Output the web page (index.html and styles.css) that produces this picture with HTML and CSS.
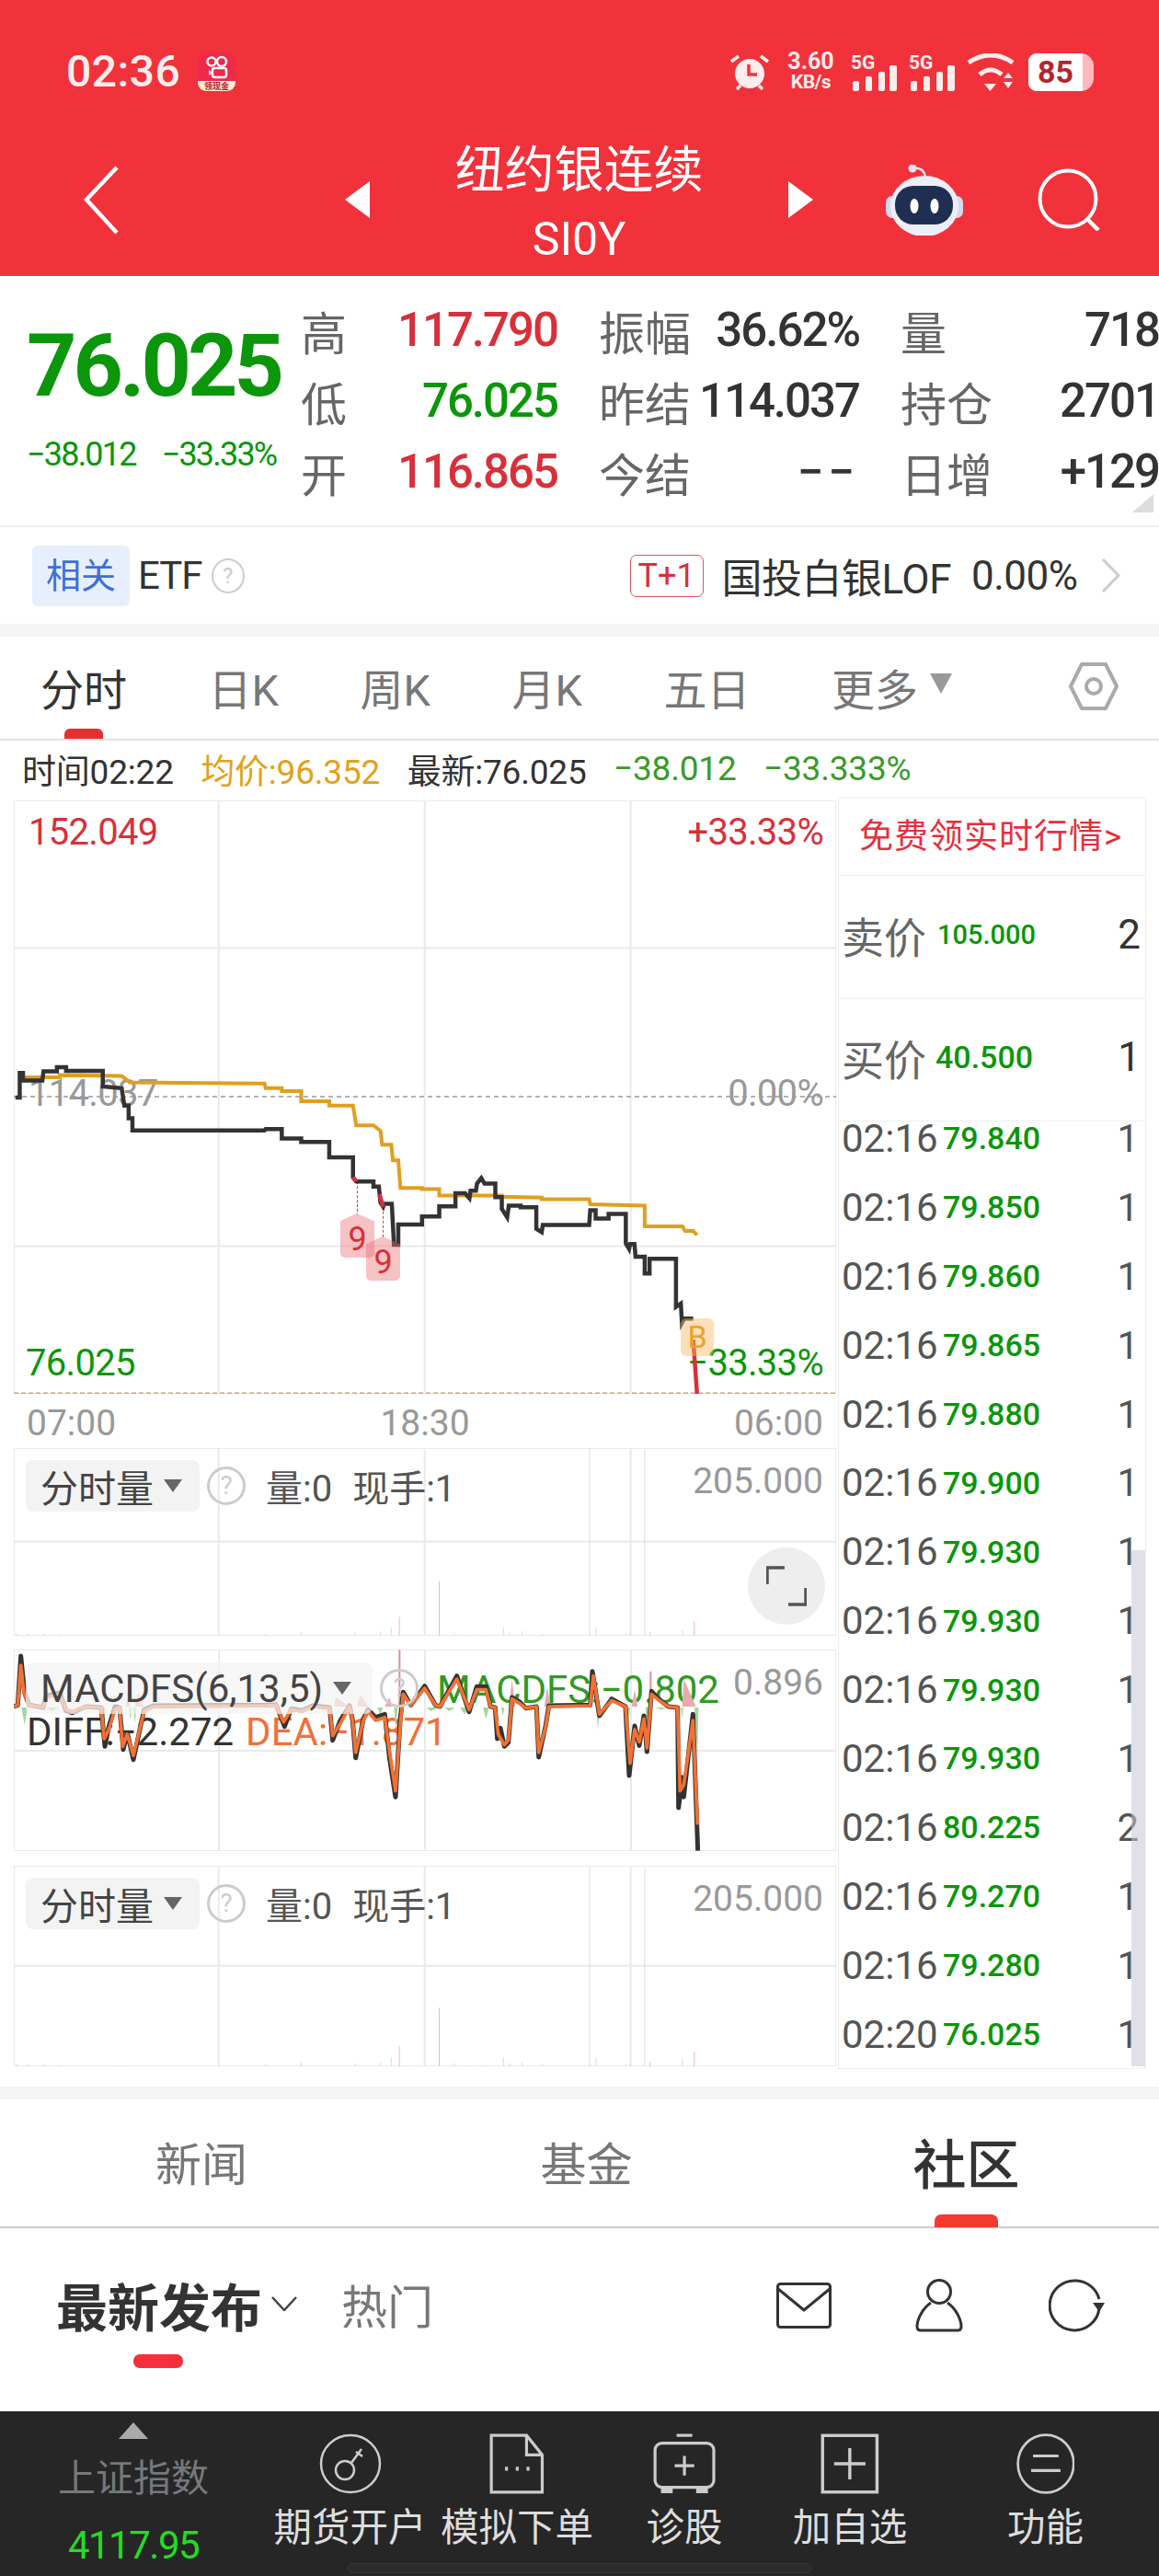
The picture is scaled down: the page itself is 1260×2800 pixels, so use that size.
FILE: index.html
```html
<!DOCTYPE html>
<html lang="zh">
<head>
    <meta charset="UTF-8">
    <title>纽约银连续</title>
    <link rel="stylesheet" href="styles.css">
</head>
<body>
    <header class="top">
        <div class="status">
            <span class="clock">02:36</span>
            <svg class="app-icon" viewBox="0 0 41 42">
                <rect width="41" height="42" rx="9" fill="#ee2a48"/>
                <path d="M0 31H41V33A9 9 0 0 1 32 42H9A9 9 0 0 1 0 33Z" fill="#fdeccb"/>
                <circle cx="15" cy="10" r="4.5" fill="none" stroke="#fff" stroke-width="2.5"/>
                <circle cx="26" cy="10" r="5" fill="none" stroke="#fff" stroke-width="2.5"/>
                <rect x="16" y="17" width="15" height="10" rx="2.5" fill="none" stroke="#fff" stroke-width="2.5"/>
                <path d="M12 19L16 22L12 25Z" fill="#fff"/>
                <text x="20.5" y="40" text-anchor="middle" class="app-icon-text">领现金</text>
            </svg>
            <svg class="alarm" viewBox="0 0 44 41">
                <circle cx="22" cy="22" r="16" fill="#fdecec"/>
                <path d="M21 12V23H30" fill="none" stroke="#f1323b" stroke-width="3.5"/>
                <path d="M2 9L10 3M34 3L42 9M8 39L12 35M36 39L32 35" stroke="#fdecec" stroke-width="3.5"/>
            </svg>
            <div class="speed"><b>3.60</b><span>KB/s</span></div>
            <svg class="signal signal-first" viewBox="0 0 50 41">
                <text x="0" y="17" class="signal-text">5G</text>
                <rect x="2" y="30" width="7" height="11" rx="2"/>
                <rect x="16" y="25" width="7" height="16" rx="2"/>
                <rect x="30" y="20" width="7" height="21" rx="2"/>
                <rect x="42" y="13" width="8" height="28" rx="2"/>
            </svg>
            <svg class="signal" viewBox="0 0 50 41">
                <text x="0" y="17" class="signal-text">5G</text>
                <rect x="2" y="30" width="7" height="11" rx="2"/>
                <rect x="16" y="25" width="7" height="16" rx="2"/>
                <rect x="30" y="20" width="7" height="21" rx="2"/>
                <rect x="42" y="13" width="8" height="28" rx="2"/>
            </svg>
            <svg class="wifi" viewBox="0 0 52 41">
                <path d="M2 10Q26 -6 50 10" fill="none" stroke="#fdecec" stroke-width="5"/>
                <path d="M14 23Q26 13 38 23" fill="none" stroke="#fdecec" stroke-width="5"/>
                <path d="M19 33H32L25.5 41ZM40 27H50L45 21ZM40 31H50L45 38Z" fill="#fdecec"/>
            </svg>
            <div class="battery"><span class="battery-level">85</span></div>
        </div>
        <nav class="nav">
            <svg class="back" viewBox="0 0 38 75"><path d="M36 2L3 37L36 73" fill="none" stroke="#fff" stroke-width="4.5"/></svg>
            <span class="tri-left"></span>
            <div class="title">
                <div class="title-name">纽约银连续</div>
                <div class="title-code">SI0Y</div>
            </div>
            <span class="tri-right"></span>
            <svg class="robot" viewBox="0 0 84 77">
                <path d="M29 4Q41 2 43 13" fill="none" stroke="#e6e4f2" stroke-width="2.5"/>
                <circle cx="29" cy="4" r="4.5" fill="#e6e4f2"/>
                <rect x="0" y="34" width="84" height="24" rx="7" fill="#d8d8ec"/>
                <ellipse cx="42" cy="45" rx="37" ry="33" fill="#eeeef8"/>
                <rect x="10" y="23" width="63" height="42" rx="20" fill="#1f2f52"/>
                <ellipse cx="31" cy="45" rx="4.5" ry="8" fill="#fff"/>
                <ellipse cx="53" cy="45" rx="4.5" ry="8" fill="#fff"/>
            </svg>
            <svg class="search" viewBox="0 0 68 68">
                <circle cx="33" cy="33" r="30.5" fill="none" stroke="#fff" stroke-width="4"/>
                <path d="M54 55L66 67" stroke="#fff" stroke-width="4.5"/>
            </svg>
        </nav>
    </header>

    <section class="quote">
        <div class="quote-main">
            <div class="price">76.025</div>
            <div class="change"><span>−38.012</span><span>−33.33%</span></div>
        </div>
        <div class="stats">
            <div class="stat"><label>高</label><b class="up">117.790</b></div>
            <div class="stat"><label>振幅</label><b>36.62%</b></div>
            <div class="stat"><label>量</label><b>718</b></div>
            <div class="stat"><label>低</label><b class="down">76.025</b></div>
            <div class="stat"><label>昨结</label><b>114.037</b></div>
            <div class="stat"><label>持仓</label><b>2701</b></div>
            <div class="stat"><label>开</label><b class="up">116.865</b></div>
            <div class="stat"><label>今结</label><b class="stat-empty">−−</b></div>
            <div class="stat"><label>日增</label><b>+129</b></div>
        </div>
        <span class="corner"></span>
    </section>

    <section class="etf">
        <span class="etf-chip">相关</span>
        <span class="etf-label">ETF</span>
        <span class="help etf-help">?</span>
        <span class="t1">T+1</span>
        <span class="etf-name">国投白银LOF</span>
        <span class="etf-pct">0.00%</span>
        <svg class="etf-arrow" viewBox="0 0 21 37"><path d="M2 1L19 18.500L2 36" fill="none" stroke="#ccc" stroke-width="3"/></svg>
    </section>
    <div class="band"></div>

    <section class="tabs">
        <div class="tab tab-active">分时</div>
        <div class="tab">日K</div>
        <div class="tab">周K</div>
        <div class="tab">月K</div>
        <div class="tab">五日</div>
        <div class="tab">更多</div>
        <span class="tab-more"></span>
        <svg class="hex" viewBox="0 0 54 52">
            <path d="M14 2H40L52 26L40 50H14L2 26Z" fill="none" stroke="#aaa" stroke-width="4" stroke-linejoin="round"/>
            <circle cx="27" cy="26" r="8" fill="none" stroke="#aaa" stroke-width="4"/>
        </svg>
    </section>

    <section class="info">
        <span class="info-time">时间02:22</span>
        <span class="info-avg">均价:96.352</span>
        <span class="info-last">最新:76.025</span>
        <span class="info-down">−38.012</span>
        <span class="info-down">−33.333%</span>
    </section>

    <section class="market">
        <div class="charts">
            <div class="main-chart">
                <span class="chart-label label-tl up">152.049</span>
                <span class="chart-label label-tr up">+33.33%</span>
                <span class="chart-label label-ml muted">114.037</span>
                <span class="chart-label label-mr muted">0.00%</span>
                <span class="chart-label label-bl down">76.025</span>
                <span class="chart-label label-br down">−33.33%</span>
                <svg class="plot" viewBox="25 22 1525 1406" preserveAspectRatio="none">
                    <path class="grid" d="M25 22H1550V1428H25ZM405 22V1428M787 22V1428M1169 22V1428M25 372H1550M25 1078H1550"/>
                    <path class="dash-mid" d="M25 724H1550"/>
                    <path class="dash-low" d="M25 1427H1550"/>
                    <path class="marker" d="M662 925V1003M710 985V1058"/>
                    <polyline class="line-avg" points="45,678 110,678 110,673 225,675 240,690 490,693 492,704 522,704 522,711 558,711 558,735 610,735 610,745 654,745 660,792 692,792 705,805 708,838 725,838 728,875 738,875 742,940 782,940 782,943 814,943 814,958 930,958 930,961 1004,963 1004,967 1092,967 1094,979 1195,982 1195,1031 1265,1031 1270,1042 1285,1042 1292,1052"/>
                    <polyline class="line-price" points="28,726 36,726 36,668 42,668 42,686 78,686 80,664 105,664 105,654 122,654 122,663 190,663 190,700 225,704 230,745 238,745 238,775 245,775 245,804 490,804 492,801 522,801 522,823 558,823 558,831 610,831 610,868 654,868 654,915 660,925 692,925 692,937 702,937 705,975 710,985 712,978 726,978 730,1075 738,1075 738,1027 782,1027 782,1008 814,1008 814,984 844,984 844,953 862,953 870,965 872,947 882,947 884,930 892,917 898,930 918,930 918,962 930,962 930,990 940,1010 943,982 965,982 965,986 994,986 994,1037 1004,1045 1006,1028 1092,1028 1094,993 1104,993 1104,1013 1128,1013 1128,1002 1160,1002 1160,1072 1166,1085 1168,1073 1176,1073 1178,1103 1195,1103 1195,1143 1204,1143 1204,1108 1253,1108 1253,1222 1262,1214 1264,1260 1268,1250 1285,1250"/>
                    <path class="line-red" d="M654 915L660 925M703 955L710 985M1285 1300L1292 1428"/>
                </svg>
                <span class="trade trade-one">9</span>
                <span class="trade trade-two">9</span>
                <span class="trade-b">B</span>
            </div>
            <div class="times"><span>07:00</span><span>18:30</span><span>06:00</span></div>

            <div class="pane pane-one">
                <svg class="plot" viewBox="25 30 1525 445" preserveAspectRatio="none">
                    <path class="grid" d="M25 30H1550V475H25ZM405 30V475M787 30V475M1169 30V475M25 252H1550"/>
                    <g id="vol">
                        <path class="bar-red" d="M740 475V430M814 475V345M1287 475V442M1205 475V466"/>
                        <path class="bar-grey" d="M1093 475V30M30 475V470M52 475V470M80 475V470M110 475V472M222 475V472M492 475V470M558 475V466M842 475V468M1160 475V470"/>
                        <path class="bar-green" d="M1195 475V35M1105 475V455M1168 475V468M1265 475V460M933 475V455M968 475V464M945 475V468M705 475V465M725 475V455M658 475V468M1005 475V470M870 475V472M900 475V472"/>
                    </g>
                </svg>
                <div class="pane-head">
                    <span class="pane-chip">分时量<i class="caret"></i></span>
                    <span class="help">?</span>
                    <span class="pane-val">量:0</span>
                    <span class="pane-val">现手:1</span>
                    <span class="pane-max">205.000</span>
                </div>
                <div class="expand">
                    <svg viewBox="0 0 44 44"><path d="M1 20V2H20M24 42H43V24" fill="none" stroke="#555" stroke-width="3.500"/></svg>
                </div>
            </div>

            <div class="pane pane-macd">
                <svg class="plot" viewBox="45 69 2682 657">
                    <path class="grid" d="M45 69H2727V726H45ZM714 69V726M1386 69V726M2058 69V726M45 399H2727"/>
                </svg>
                <div class="macd-legend">
                    <span class="legend-diff">DIFF:−2.272</span>
                    <span class="legend-dea">DEA:−1.871</span>
                </div>
                <span class="legend-macd">MACDFS:−0.802</span>
                <svg class="plot" viewBox="45 69 2682 657">
                    <path class="hist-red" d="M410 255L415 225L425 255ZM440 255L450 210L470 255ZM1090 255L1095 225L1140 255ZM1165 255L1175 215L1200 255ZM1255 255L1270 225L1280 255ZM1660 255L1670 165L1680 255ZM1775 255L1785 190L1795 255ZM2060 255L2070 200L2080 255ZM2225 255L2230 165L2270 255Z"/>
                    <path class="hist-spike" d="M1303 255V70M2122 255V140"/>
                    <path class="hist-green" d="M70 258L80 315L90 258ZM150 258L170 270L190 258ZM335 258L340 315L345 258ZM420 258L425 300L430 258ZM435 258L440 310L445 258ZM1230 258L1240 280L1250 258ZM1285 258L1290 330L1297 258ZM1390 258L1405 270L1430 258ZM1450 258L1465 270L1485 258ZM1500 258L1515 280L1530 258ZM1575 258L1585 295L1595 258ZM1635 258L1640 285L1645 258ZM1945 258L1950 330L1957 258ZM2045 258L2050 320L2055 258ZM2105 258L2110 330L2115 258ZM2140 258L2155 265L2180 258ZM2220 258L2225 295L2228 258ZM2265 258L2275 420L2278 258Z"/>
                    <polyline class="line-diff" points="45,255 58,250 68,90 80,210 95,250 140,258 150,220 195,210 215,268 235,275 280,255 330,258 342,385 355,320 375,255 390,258 402,395 415,340 435,428 470,265 500,252 870,250 900,248 928,320 950,262 985,268 1020,252 1075,258 1085,365 1110,300 1140,252 1150,300 1160,422 1185,295 1200,265 1225,290 1255,280 1270,420 1290,550 1305,300 1315,208 1340,250 1385,188 1420,250 1435,255 1490,155 1530,272 1555,190 1585,190 1600,255 1615,258 1622,360 1632,325 1645,385 1658,372 1670,225 1695,240 1715,260 1750,255 1757,420 1780,315 1790,252 1925,250 1932,140 1955,285 1995,230 2040,255 2052,480 2070,318 2085,382 2100,285 2110,402 2125,205 2150,232 2180,255 2210,258 2213,585 2225,485 2230,550 2260,280 2276,725"/>
                    <polyline class="line-dea" points="45,255 58,250 68,120 78,210 95,250 140,258 150,225 195,215 215,265 235,272 280,255 330,258 340,360 355,330 375,265 390,258 400,385 415,345 435,415 470,270 500,255 870,252 900,250 925,305 950,265 985,270 1020,255 1075,260 1085,350 1110,310 1140,255 1150,300 1160,405 1185,300 1200,270 1225,300 1255,290 1270,400 1290,530 1305,320 1315,215 1340,250 1385,195 1420,250 1435,255 1490,165 1530,265 1555,200 1585,200 1600,255 1615,258 1625,345 1645,380 1658,365 1670,230 1695,245 1715,260 1750,255 1757,405 1780,320 1790,255 1925,252 1935,155 1955,280 1995,235 2040,255 2055,440 2070,330 2085,370 2100,295 2110,390 2125,215 2150,235 2180,255 2210,258 2218,530 2230,510 2260,300 2275,640"/>
                </svg>
                <div class="pane-head pane-head-macd">
                    <span class="pane-chip pane-chip-macd">MACDFS(6,13,5)<i class="caret"></i></span>
                    <span class="help">?</span>
                    <span class="pane-max pane-max-macd">0.896</span>
                </div>
            </div>

            <div class="pane pane-three">
                <svg class="plot" viewBox="25 30 1525 445" preserveAspectRatio="none">
                    <path class="grid" d="M25 30H1550V475H25ZM405 30V475M787 30V475M1169 30V475M25 252H1550"/>
                    <use href="#vol"/>
                </svg>
                <div class="pane-head">
                    <span class="pane-chip">分时量<i class="caret"></i></span>
                    <span class="help">?</span>
                    <span class="pane-val">量:0</span>
                    <span class="pane-val">现手:1</span>
                    <span class="pane-max">205.000</span>
                </div>
            </div>
        </div>

        <aside class="ticks">
            <div class="promo">免费领实时行情&gt;</div>
            <div class="book book-first">
                <span class="book-name">卖价</span><span class="book-price book-price-small">105.000</span><span class="book-qty">2</span>
            </div>
            <div class="book">
                <span class="book-name">买价</span><span class="book-price">40.500</span><span class="book-qty">1</span>
            </div>
            <div class="tick-list">
                <div class="tick"><span class="tick-time">02:16</span><span class="tick-price">79.840</span><span class="tick-qty">1</span></div>
                <div class="tick"><span class="tick-time">02:16</span><span class="tick-price">79.850</span><span class="tick-qty">1</span></div>
                <div class="tick"><span class="tick-time">02:16</span><span class="tick-price">79.860</span><span class="tick-qty">1</span></div>
                <div class="tick"><span class="tick-time">02:16</span><span class="tick-price">79.865</span><span class="tick-qty">1</span></div>
                <div class="tick"><span class="tick-time">02:16</span><span class="tick-price">79.880</span><span class="tick-qty">1</span></div>
                <div class="tick"><span class="tick-time">02:16</span><span class="tick-price">79.900</span><span class="tick-qty">1</span></div>
                <div class="tick"><span class="tick-time">02:16</span><span class="tick-price">79.930</span><span class="tick-qty">1</span></div>
                <div class="tick"><span class="tick-time">02:16</span><span class="tick-price">79.930</span><span class="tick-qty">1</span></div>
                <div class="tick"><span class="tick-time">02:16</span><span class="tick-price">79.930</span><span class="tick-qty">1</span></div>
                <div class="tick"><span class="tick-time">02:16</span><span class="tick-price">79.930</span><span class="tick-qty">1</span></div>
                <div class="tick"><span class="tick-time">02:16</span><span class="tick-price">80.225</span><span class="tick-qty">2</span></div>
                <div class="tick"><span class="tick-time">02:16</span><span class="tick-price">79.270</span><span class="tick-qty">1</span></div>
                <div class="tick"><span class="tick-time">02:16</span><span class="tick-price">79.280</span><span class="tick-qty">1</span></div>
                <div class="tick"><span class="tick-time">02:20</span><span class="tick-price">76.025</span><span class="tick-qty">1</span></div>
            </div>
            <span class="scrollbar"></span>
        </aside>
    </section>
    <div class="band"></div>

    <section class="news-tabs">
        <div class="news-tab">新闻</div>
        <div class="news-tab">基金</div>
        <div class="news-tab news-tab-active">社区</div>
    </section>

    <section class="feed">
        <div class="feed-row">
            <span class="feed-latest">最新发布</span>
            <svg class="feed-chevron" viewBox="0 0 28 16"><path d="M1 1L14 15L27 1" fill="none" stroke="#444" stroke-width="2.500"/></svg>
            <span class="feed-hot">热门</span>
            <svg class="feed-mail" viewBox="0 0 60 50">
                <rect x="1.500" y="1.500" width="57" height="47" rx="3" fill="none" stroke="#333" stroke-width="3"/>
                <path d="M2 7L30 30L58 7" fill="none" stroke="#333" stroke-width="3"/>
            </svg>
            <svg class="feed-user" viewBox="0 0 52 58">
                <ellipse cx="26" cy="14" rx="12.500" ry="12.500" fill="none" stroke="#333" stroke-width="3"/>
                <path d="M17 26C8 32 2 44 2 52Q2 56 6 56H46Q50 56 50 52C50 44 44 32 35 26" fill="none" stroke="#333" stroke-width="3"/>
            </svg>
            <svg class="feed-refresh" viewBox="0 0 61 58">
                <path d="M30 2A27 27 0 1 0 55 32" fill="none" stroke="#333" stroke-width="3"/>
                <path d="M30 2A27 27 0 0 1 55 22" fill="none" stroke="#333" stroke-width="3"/>
                <path d="M48 26H61L55 36Z" fill="#333"/>
            </svg>
        </div>
        <span class="feed-mark"></span>
    </section>

    <footer class="bar">
        <div class="index">
            <span class="index-tri"></span>
            <span class="index-name">上证指数</span>
            <span class="index-val">4117.95</span>
        </div>
        <div class="bar-item">
            <svg viewBox="0 0 68 66" class="bar-icon">
                <ellipse cx="34" cy="33" rx="32" ry="31" fill="none" stroke="#ccc" stroke-width="2.500"/>
                <circle cx="28" cy="40" r="10" fill="none" stroke="#ccc" stroke-width="2.500"/>
                <path d="M35 32L46 17M40 20L47 25" fill="none" stroke="#ccc" stroke-width="2.500"/>
            </svg>
            <span>期货开户</span>
        </div>
        <div class="bar-item">
            <svg viewBox="0 0 56 62" class="bar-icon">
                <path d="M2 2H38L54 22V60H2Z M38 2V22H54" fill="none" stroke="#ccc" stroke-width="3"/>
                <path d="M16 36h3M27 36h3M38 36h3" stroke="#ccc" stroke-width="4"/>
            </svg>
            <span>模拟下单</span>
        </div>
        <div class="bar-item">
            <svg viewBox="0 0 64 62" class="bar-icon">
                <path d="M24 2H40" stroke="#ccc" stroke-width="3"/>
                <rect x="2" y="10" width="60" height="45" rx="7" fill="none" stroke="#ccc" stroke-width="3"/>
                <path d="M32 23V43M22 33H42" stroke="#ccc" stroke-width="3"/>
                <path d="M8 55V61H20V55M44 55V61H56V55" fill="#ccc"/>
            </svg>
            <span>诊股</span>
        </div>
        <div class="bar-item">
            <svg viewBox="0 0 56 58" class="bar-icon">
                <rect x="2" y="2" width="52" height="54" fill="none" stroke="#ccc" stroke-width="3"/>
                <path d="M28 14V44M13 29H43" stroke="#ccc" stroke-width="3"/>
            </svg>
            <span>加自选</span>
        </div>
        <div class="bar-item">
            <svg viewBox="0 0 60 62" class="bar-icon">
                <ellipse cx="30" cy="31" rx="28.500" ry="29.500" fill="none" stroke="#ccc" stroke-width="2.500"/>
                <path d="M17 23H43M15 38H45" stroke="#ccc" stroke-width="3"/>
            </svg>
            <span>功能</span>
        </div>
        <span class="home"></span>
    </footer>
</body>
</html>
```

FILE: styles.css
```css
* {
    box-sizing: border-box;
}

body {
    margin: 0;
    width: 1260px;
    height: 2800px;
    overflow: hidden;
    background-color: #fff;
    color: #333;
    font-family: Roboto, "Noto Sans CJK SC", sans-serif;
}

.up { color: #d8303a; }
.down { color: #0b960b; }
.muted { color: #999; }

/* red header */
.top {
    height: 300px;
    padding-top: 57px;
    background-color: #f1323b;
    border-bottom: 1px solid #d9444b;
}

.status {
    display: flex;
    align-items: center;
    height: 42px;
    padding-left: 72px;
    color: #fdecec;
}

.clock {
    width: 125px;
    font-size: 48px;
    font-weight: 500;
    letter-spacing: 0.5px;
    line-height: 42px;
}

.app-icon {
    width: 41px;
    height: 42px;
    margin-left: 18px;
}

.app-icon-text {
    font-size: 9px;
    font-weight: 700;
    fill: #b3222a;
}

.alarm {
    width: 44px;
    height: 41px;
    margin-left: 537px;
}

.speed {
    display: flex;
    flex-direction: column;
    align-items: center;
    width: 51px;
    margin-left: 19px;
    line-height: 23px;
}

.speed b {
    font-size: 25px;
    font-weight: 700;
}

.speed span {
    font-size: 21px;
    font-weight: 700;
    letter-spacing: -0.5px;
}

.signal {
    width: 50px;
    height: 41px;
    margin-left: 13px;
    fill: #fdecec;
    overflow: visible;
}

.signal-first {
    margin-left: 18px;
}

.signal-text {
    font-size: 21px;
    font-weight: 700;
}

.wifi {
    width: 52px;
    height: 41px;
    margin-left: 13px;
}

.battery {
    width: 71px;
    height: 41px;
    margin-left: 15px;
    padding-right: 12px;
    border-radius: 9px 14px 14px 9px;
    background-color: #ffb9bd;
}

.battery-level {
    display: block;
    height: 100%;
    border-radius: 9px 0 0 9px;
    background-color: #fff;
    color: #b3262f;
    font-size: 34px;
    font-weight: 700;
    line-height: 41px;
    text-align: center;
}

.nav {
    display: flex;
    align-items: center;
    height: 134px;
    margin-top: 51px;
}

.back {
    width: 38px;
    height: 75px;
    margin-left: 91px;
}

.tri-left,
.tri-right {
    width: 0;
    height: 0;
    border-top: 20px solid transparent;
    border-bottom: 20px solid transparent;
}

.tri-left {
    margin-left: 246px;
    border-right: 27px solid #fff;
}

.tri-right {
    border-left: 27px solid #fff;
}

.title {
    width: 455px;
    color: #fff;
    text-align: center;
}

.title-name {
    height: 66px;
    padding-top: 3px;
    font-size: 54px;
    line-height: 66px;
}

.title-code {
    margin-top: 20px;
    height: 48px;
    font-size: 50px;
    line-height: 48px;
}

.robot {
    width: 84px;
    height: 77px;
    margin-left: 79px;
}

.search {
    width: 68px;
    height: 68px;
    margin-left: 81px;
}

/* quote block */
.quote {
    position: relative;
    display: flex;
    height: 273px;
    padding-top: 20px;
    border-bottom: 2px solid #ececec;
    overflow: hidden;
}

.quote-main {
    width: 330px;
    padding-left: 29px;
}

.price {
    margin-top: 34px;
    color: #0b960b;
    font-size: 95px;
    font-weight: 700;
    letter-spacing: -4px;
    line-height: 88px;
}

.change {
    display: flex;
    gap: 28px;
    margin-top: 32px;
    color: #0b960b;
    font-size: 36px;
    letter-spacing: -1.8px;
    line-height: 40px;
}

.stats {
    display: grid;
    grid-template-columns: 279px 283px 281px;
    grid-auto-rows: 77px;
    column-gap: 45px;
}

.stat {
    display: flex;
    justify-content: space-between;
    align-items: center;
}

.stat label {
    color: #666;
    font-size: 50px;
}

.stat b {
    font-size: 51px;
    font-weight: 500;
    letter-spacing: -2px;
}

.stat-empty {
    letter-spacing: 5px !important;
}

.corner {
    position: absolute;
    right: 6px;
    bottom: 14px;
    width: 0;
    height: 0;
    border-left: 23px solid transparent;
    border-bottom: 20px solid #ddd;
}

/* ETF row */
.etf {
    display: flex;
    align-items: center;
    height: 105px;
    padding-left: 35px;
}

.etf-chip {
    width: 106px;
    height: 66px;
    border-radius: 6px;
    background-color: #e8effc;
    color: #3d6fd8;
    font-size: 38px;
    line-height: 66px;
    text-align: center;
}

.etf-label {
    margin-left: 9px;
    font-size: 42px;
    letter-spacing: -1px;
}

.help {
    display: block;
    flex: none;
    width: 42px;
    height: 42px;
    border: 3px solid #ccc;
    border-radius: 50%;
    color: #ccc;
    font-size: 28px;
    line-height: 36px;
    text-align: center;
}

.etf-help {
    width: 36px;
    height: 38px;
    margin-left: 10px;
    border-width: 2px;
    font-size: 24px;
    line-height: 34px;
}

.t1 {
    width: 80px;
    height: 46px;
    margin-left: 419px;
    border: 1px solid #d9565c;
    border-radius: 7px;
    color: #d8303a;
    font-size: 36px;
    line-height: 44px;
    text-align: center;
}

.etf-name {
    margin-left: 20px;
    font-size: 44px;
    letter-spacing: -0.5px;
}

.etf-pct {
    margin-left: 22px;
    font-size: 44px;
    letter-spacing: -0.5px;
}

.etf-arrow {
    width: 21px;
    height: 37px;
    margin-left: 26px;
}

.band {
    height: 14px;
    background-color: #f5f5f5;
}

/* period tabs */
.tabs {
    position: relative;
    display: flex;
    align-items: center;
    gap: 88.500px;
    height: 113px;
    padding-left: 44px;
    padding-bottom: 3px;
    border-bottom: 2px solid #e4e4e4;
}

.tab {
    color: #777;
    font-size: 47px;
}

.tab-active {
    position: relative;
    color: #333;
}

.tab-active::after {
    content: "";
    position: absolute;
    left: 26px;
    bottom: -22px;
    width: 42px;
    height: 11px;
    border-radius: 6px 6px 0 0;
    background-color: #e6302f;
}

.tab-more {
    margin-left: -76px;
    margin-top: -6px;
    width: 0;
    height: 0;
    border-left: 12px solid transparent;
    border-right: 12px solid transparent;
    border-top: 22px solid #999;
}

.hex {
    width: 54px;
    height: 52px;
    margin-left: 39px;
}

/* live values row */
.info {
    display: flex;
    align-items: center;
    gap: 29.500px;
    height: 61px;
    padding-left: 24px;
    font-size: 37px;
    letter-spacing: -0.2px;
    white-space: nowrap;
}

.info-avg { color: #e0a21d; }
.info-time, .info-last { color: #333; }
.info-down { color: #3a9a2a; }

/* charts and ticks */
.market {
    display: flex;
    height: 1402px;
    overflow: hidden;
}

.charts {
    width: 896px;
    margin-left: 15px;
    padding-top: 4px;
}

.plot {
    position: absolute;
    left: 0;
    top: 0;
    width: 100%;
    height: 100%;
}

.main-chart {
    position: relative;
    width: 894px;
    height: 645px;
}

.grid {
    fill: none;
    stroke: #eaeaea;
    stroke-width: 2px;
    vector-effect: non-scaling-stroke;
}

.dash-mid,
.dash-low,
.marker,
.line-avg,
.line-price,
.line-red {
    fill: none;
    vector-effect: non-scaling-stroke;
}

.dash-mid {
    stroke: #999;
    stroke-width: 1.5px;
    stroke-dasharray: 5 4;
}

.dash-low {
    stroke: #c9a57a;
    stroke-width: 2px;
    stroke-dasharray: 5 3;
}

.marker {
    stroke: #d8303a;
    stroke-width: 1px;
    stroke-dasharray: 3 2;
}

.line-avg {
    stroke: #e09f1f;
    stroke-width: 4px;
}

.line-price {
    stroke: #333;
    stroke-width: 4.500px;
}

.line-red {
    stroke: #d8303a;
    stroke-width: 4.500px;
}

.chart-label {
    position: absolute;
    font-size: 40px;
    letter-spacing: -0.7px;
    line-height: 44px;
}

.label-tl { left: 16px; top: 13px; }
.label-tr { right: 14px; top: 13px; }
.label-ml { left: 16px; top: 297px; }
.label-mr { right: 14px; top: 297px; }
.label-bl { left: 13px; top: 590px; }
.label-br { right: 14px; top: 590px; }

.trade {
    position: absolute;
    width: 37px;
    height: 40px;
    border-radius: 0 0 5px 5px;
    background-color: rgba(236, 110, 115, 0.42);
    color: #d8303a;
    font-size: 36px;
    line-height: 40px;
    text-align: center;
}

.trade::before {
    content: "";
    position: absolute;
    left: 0;
    top: -8px;
    border-left: 18.500px solid transparent;
    border-right: 18.500px solid transparent;
    border-bottom: 8px solid rgba(236, 110, 115, 0.42);
}

.trade-one { left: 355px; top: 457px; }
.trade-two { left: 383px; top: 482px; }

.trade-b {
    position: absolute;
    left: 725px;
    top: 563px;
    width: 36px;
    height: 41px;
    border-radius: 6px;
    background-color: rgba(250, 185, 100, 0.45);
    color: #eda02a;
    font-size: 34px;
    line-height: 41px;
    text-align: center;
}

.times {
    display: flex;
    justify-content: space-between;
    align-items: center;
    width: 894px;
    height: 59px;
    padding: 4px 14px 0 14px;
    color: #999;
    font-size: 39px;
}

.pane {
    position: relative;
    width: 894px;
    padding: 13px 14px 0 13px;
}

.pane-one { height: 204px; }
.pane-macd { height: 219px; margin-top: 15px; }
.pane-three { height: 218px; margin-top: 16px; }

.pane-head {
    position: relative;
    display: flex;
    align-items: center;
    height: 56px;
}

.pane-chip {
    position: relative;
    z-index: 1;
    display: flex;
    align-items: center;
    width: 189px;
    height: 56px;
    padding-left: 16px;
    border-radius: 8px;
    background-color: #f3f3f3;
    color: #444;
    font-size: 41px;
}

.pane-chip-macd {
    width: 377px;
    background-color: rgba(243, 243, 243, 0.7);
    font-size: 42px;
    white-space: nowrap;
}

.caret {
    margin-left: 11px;
    border-left: 10px solid transparent;
    border-right: 10px solid transparent;
    border-top: 14px solid #666;
}

.pane-head .help {
    margin-left: 8px;
}

.pane-val {
    margin-left: 22px;
    color: #555;
    font-size: 40px;
}

.pane-max {
    margin-left: auto;
    margin-top: -10px;
    color: #999;
    font-size: 39px;
}

.pane-head-macd {
    position: absolute;
    left: 13px;
    right: 14px;
    top: 14px;
}

.pane-max-macd {
    margin-top: -12px;
}

.macd-legend {
    position: absolute;
    left: 14px;
    top: 66px;
    display: flex;
    gap: 13px;
    font-size: 42px;
    line-height: 48px;
    white-space: nowrap;
}

.legend-dea { color: #f0703a; }

.legend-macd {
    position: absolute;
    left: 460px;
    top: 20px;
    color: #2f9a22;
    font-size: 42px;
    line-height: 48px;
    white-space: nowrap;
}

.expand {
    position: absolute;
    right: 12px;
    top: 108px;
    display: flex;
    align-items: center;
    justify-content: center;
    width: 84px;
    height: 84px;
    border-radius: 50%;
    background-color: #eee;
}

.expand svg {
    width: 44px;
    height: 44px;
}

.bar-red,
.bar-grey,
.bar-green,
.hist-spike {
    fill: none;
    stroke-width: 1px;
    vector-effect: non-scaling-stroke;
}

.bar-red { stroke: #efb9b9; }
.bar-grey { stroke: #dcd8d8; }
.bar-green { stroke: #d2e6ce; }
.hist-spike { stroke: #e08f93; stroke-width: 2px; }
.hist-red { fill: #e9aaad; }
.hist-green { fill: #a5d6a0; }

.line-diff,
.line-dea {
    fill: none;
    stroke-linejoin: round;
}

.line-diff {
    stroke: #333;
    stroke-width: 15px;
}

.line-dea {
    stroke: #f37034;
    stroke-width: 11px;
}

/* right column */
.ticks {
    position: relative;
    width: 335px;
    height: 1383px;
    border: 1px solid #eee;
    overflow: hidden;
}

.promo {
    height: 85px;
    padding-top: 21px;
    padding-left: 22px;
    border-bottom: 1px solid #eee;
    color: #e5303c;
    font-size: 37px;
    letter-spacing: 1px;
    line-height: 44px;
    white-space: nowrap;
}

.book {
    display: flex;
    align-items: center;
    height: 133px;
    padding: 0 5px 6px 3px;
    border-bottom: 1px solid #eee;
}

.book-first {
    height: 134px;
}

.book-name {
    width: 92px;
    color: #666;
    font-size: 46px;
}

.book-price {
    margin-left: 10px;
    color: #0b960b;
    font-size: 34px;
    font-weight: 500;
}

.book-price-small {
    margin-left: 12px;
    font-size: 29px;
}

.book-qty {
    margin-left: auto;
    color: #333;
    font-size: 44px;
}

.tick-list {
    margin-top: -19px;
}

.tick {
    display: flex;
    align-items: center;
    height: 74.900px;
    padding: 0 7px 0 3px;
}

.tick-time {
    width: 110px;
    color: #555;
    font-size: 42px;
}

.tick-price {
    color: #0b960b;
    font-size: 34px;
    font-weight: 500;
}

.tick-qty {
    margin-left: auto;
    color: #555;
    font-size: 42px;
}

.scrollbar {
    position: absolute;
    right: 0;
    top: 818px;
    width: 15px;
    height: 561px;
    background-color: rgba(200, 198, 212, 0.55);
}

/* news tabs */
.news-tabs {
    display: grid;
    grid-template-columns: 438px 399px 1fr;
    align-items: center;
    height: 140px;
    border-bottom: 2px solid #ccc;
}

.news-tab {
    position: relative;
    padding-bottom: 4px;
    color: #777;
    font-size: 50px;
    text-align: center;
}

.news-tab-active {
    padding-left: 4px;
    color: #333;
    font-size: 58px;
    font-weight: 500;
}

.news-tab-active::after {
    content: "";
    position: absolute;
    left: 179px;
    top: 100px;
    width: 69px;
    height: 14px;
    border-radius: 7px 7px 0 0;
    background-color: #f53a30;
}

.feed {
    height: 199px;
    padding: 52px 0 0 61px;
}

.feed-row {
    display: flex;
    align-items: center;
    height: 60px;
}

.feed-latest {
    font-size: 56px;
    font-weight: 700;
    white-space: nowrap;
}

.feed-chevron {
    width: 28px;
    height: 16px;
    margin-left: 10px;
}

.feed-hot {
    margin-left: 48px;
    color: #777;
    font-size: 50px;
}

.feed-mail {
    width: 60px;
    height: 50px;
    margin-top: 4px;
    margin-left: 373px;
}

.feed-user {
    width: 52px;
    height: 58px;
    margin-top: 4px;
    margin-left: 91px;
}

.feed-refresh {
    width: 61px;
    height: 58px;
    margin-top: 4px;
    margin-left: 93px;
}

.feed-mark {
    display: block;
    width: 54px;
    height: 15px;
    margin: 25px 0 0 84px;
    border-radius: 7px;
    background-color: #f5303c;
}

/* bottom bar */
.bar {
    position: relative;
    display: grid;
    grid-template-columns: 290px 181px 182px 182px 178px 247px;
    height: 179px;
    background-color: #262626;
}

.index {
    display: flex;
    flex-direction: column;
    align-items: center;
    padding-top: 12px;
}

.index-tri {
    border-left: 16px solid transparent;
    border-right: 16px solid transparent;
    border-bottom: 18px solid #aaa;
}

.index-name {
    margin-top: 18px;
    color: #77787c;
    font-size: 41px;
    line-height: 50px;
}

.index-val {
    margin-top: 23px;
    color: #22dd22;
    font-size: 42px;
    letter-spacing: -1.500px;
    line-height: 50px;
}

.bar-item {
    display: flex;
    flex-direction: column;
    align-items: center;
    color: #ddd;
    font-size: 41.500px;
    line-height: 50px;
    white-space: nowrap;
}

.bar-icon {
    height: 66px;
    margin-top: 24px;
    margin-bottom: 12px;
}

.home {
    position: absolute;
    left: 378px;
    top: 165px;
    width: 504px;
    height: 11px;
    border: 1px solid #383838;
    border-radius: 5px;
    background-color: #2b2b2b;
}
```
